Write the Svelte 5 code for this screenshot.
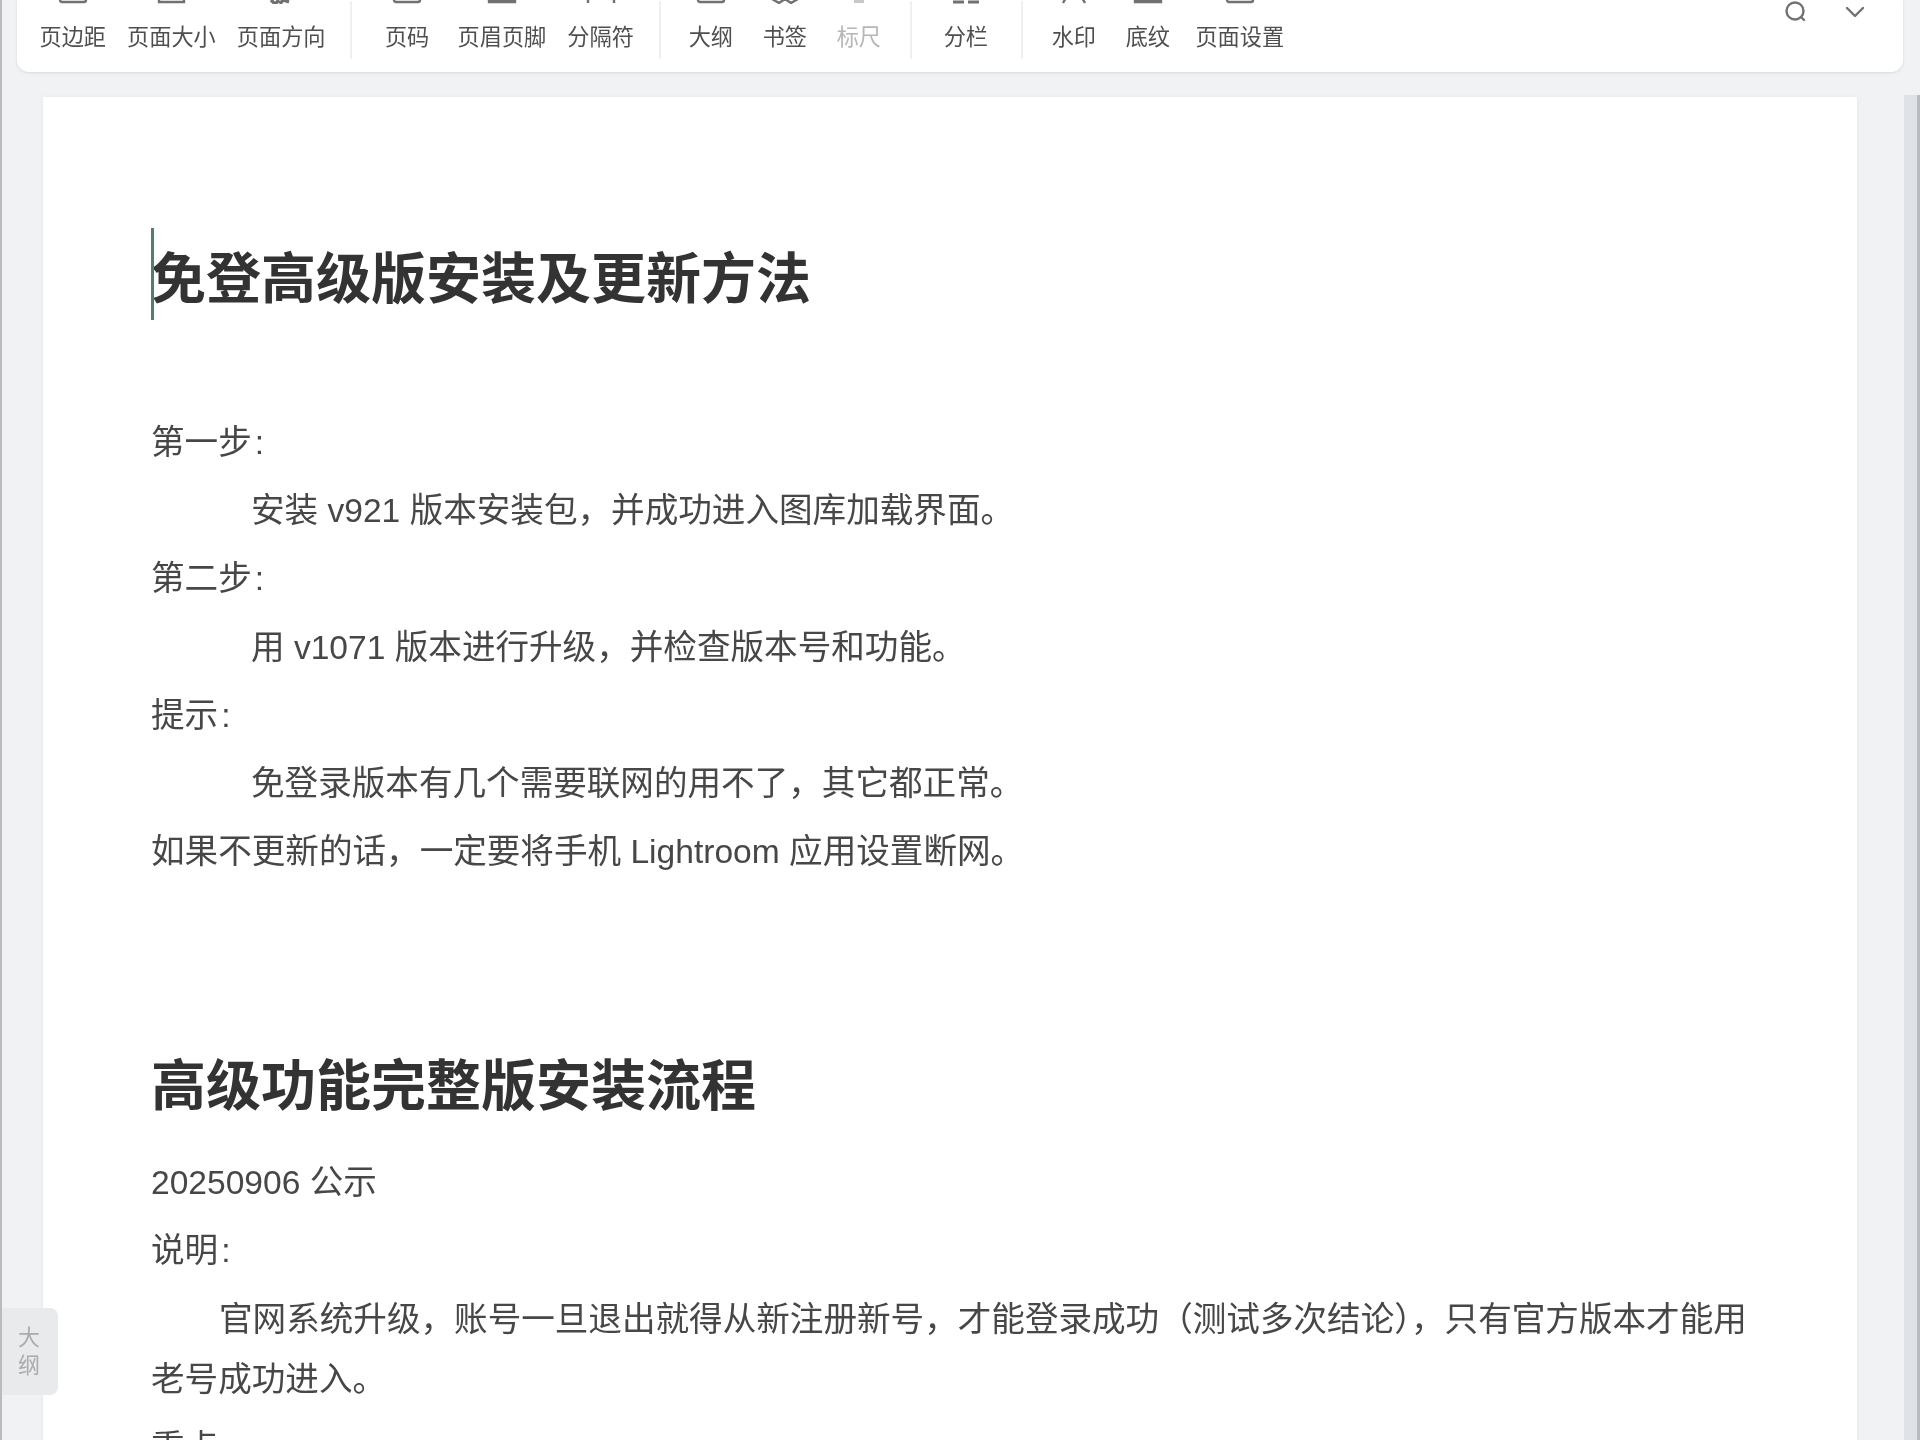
<script>
  const groups = [
    [{ t: '页边距', i: 'box' }, { t: '页面大小', i: 'size' }, { t: '页面方向', i: 'dir' }],
    [{ t: '页码', i: 'box', wide: true }, { t: '页眉页脚', i: 'fill' }, { t: '分隔符', i: 'legs' }],
    [{ t: '大纲', i: 'box' }, { t: '书签', i: 'book' }, { t: '标尺', i: 'dot', off: true }],
    [{ t: '分栏', i: 'cols' }],
    [{ t: '水印', i: 'legs2' }, { t: '底纹', i: 'fill' }, { t: '页面设置', i: 'box' }]
  ];
</script>

<div class="app">
  <header class="toolbar">
    {#each groups as g, n}
      {#if n > 0}<span class="sep s{n}"></span>{/if}
      {#each g as item}
        <div class="tool" class:off={item.off} class:wide={item.wide}>
          <svg class="ic" width="36" height="36" viewBox="0 0 36 36" fill="none" stroke="currentColor" stroke-width="2.4">
            {#if item.i === 'box'}
              <rect x="5" y="8" width="26" height="26" rx="2" />
            {:else if item.i === 'size'}
              <path d="M6 28v6h6M12 34h19V8" />
            {:else if item.i === 'dir'}
              <path d="M8 32l4 4 4-4M17 36l3-4 6 2" stroke-width="3.4" />
            {:else if item.i === 'fill'}
              <path d="M5 31h26v3H5z" fill="currentColor" />
            {:else if item.i === 'legs'}
              <path d="M5 32v3M31 32v3" />
            {:else if item.i === 'book'}
              <path d="M5 31l7 4 6-4 6 4 7-4" />
            {:else if item.i === 'dot'}
              <path d="M13 30h10v5h-10z" fill="currentColor" stroke="none" />
            {:else if item.i === 'cols'}
              <path d="M5 34h11M20 34h11" stroke-width="3" />
            {:else if item.i === 'legs2'}
              <path d="M11 28l-4 7M25 28l4 7" />
            {/if}
          </svg>
          <span class="label">{item.t}</span>
        </div>
      {/each}
    {/each}
    <div class="actions">
      <svg width="24" height="24" viewBox="0 0 24 24" fill="none" stroke="#6f7173" stroke-width="2.4" stroke-linecap="round">
        <circle cx="11" cy="11" r="8.5" /><path d="M17 17l3 3" />
      </svg>
      <svg width="24" height="24" viewBox="0 0 24 24" fill="none" stroke="#6f7173" stroke-width="2.4" stroke-linecap="round" stroke-linejoin="round">
        <path d="M4 8l8 8 8-8" />
      </svg>
    </div>
  </header>

  <main class="page">
    <h1 class="first"><i class="caret"></i>免登高级版安装及更新方法</h1>
    <p>第一步<span class="colon">:</span></p>
    <p class="in3">安装 v921 版本安装包&#xFF0C;并成功进入图库加载界面。</p>
    <p>第二步<span class="colon">:</span></p>
    <p class="in3">用 v1071 版本进行升级&#xFF0C;并检查版本号和功能。</p>
    <p>提示<span class="colon">:</span></p>
    <p class="in3">免登录版本有几个需要联网的用不了&#xFF0C;其它都正常。</p>
    <p>如果不更新的话&#xFF0C;一定要将手机 Lightroom 应用设置断网。</p>
    <h1 class="second">高级功能完整版安装流程</h1>
    <p>20250906 公示</p>
    <p>说明<span class="colon">:</span></p>
    <p class="in2">官网系统升级&#xFF0C;账号一旦退出就得从新注册新号&#xFF0C;才能登录成功&#xFF08;测试多次结论&#xFF09;&#xFF0C;只有官方版本才能用老号成功进入。</p>
    <p>重点<span class="colon">:</span></p>
  </main>

  <aside class="outline"><span>大</span><span>纲</span></aside>
  <div class="edge"></div>
  <div class="thumb"></div>
</div>

<style>
  :global(body) { margin: 0; background: #f1f2f4; }
  .app {
    position: relative;
    height: 1440px;
    overflow: hidden;
    background: #f1f2f4;
    font-family: "Liberation Sans", "Noto Sans CJK SC", sans-serif;
    filter: blur(0.7px);
  }
  .toolbar {
    box-sizing: border-box;
    display: flex;
    align-items: flex-end;
    height: 72px;
    margin: 0 17px;
    width: 1886px;
    padding: 0 12px 21px;
    background: #fff;
    border-radius: 0 0 12px 12px;
    box-shadow: 0 1px 3px rgba(0, 0, 0, 0.1);
  }
  .tool {
    box-sizing: border-box;
    display: flex;
    flex-direction: column;
    align-items: center;
    min-width: 74px;
    padding: 0 10.5px;
    color: #6f7173;
  }
  .tool.wide { min-width: 80px; }
  .tool.off { color: #c6c8ca; }
  .ic { display: block; margin-bottom: 21px; flex: none; }
  .label {
    font-size: 22.2px;
    line-height: 26px;
    color: #4e4f50;
    white-space: nowrap;
  }
  .off .label { color: #b5b6b7; }
  .sep {
    flex: none;
    width: 2px;
    height: 58px;
    margin-bottom: -8px;
    background: #f0f0f1;
  }
  .s1 { margin-left: 14px; margin-right: 15px; }
  .s2 { margin-left: 14.5px; margin-right: 13px; }
  .s3 { margin-left: 14px; margin-right: 17px; }
  .s4 { margin-left: 18px; margin-right: 14px; }
  .actions {
    margin-left: auto;
    display: flex;
    gap: 35px;
    align-self: flex-start;
    margin-right: 24px;
    margin-top: 0;
  }
  .page {
    box-sizing: border-box;
    margin: 25px 0 0 43px;
    width: 1814px;
    padding: 136px 108px 0;
    background: #fff;
    color: #474747;
    box-shadow: 0 0 4px rgba(0, 0, 0, 0.06);
  }
  h1 {
    position: relative;
    margin: 0;
    font-size: 55px;
    line-height: 92px;
    font-weight: 700;
    color: #333;
  }
  .first { margin-bottom: 88px; }
  .second { margin: 158px 0 21px; }
  .caret {
    position: absolute;
    left: 0;
    top: -5px;
    width: 3px;
    height: 92px;
    background: #4f7f70;
  }
  p {
    margin: 0 0 8.2px;
    font-size: 33.6px;
    line-height: 60px;
  }
  .colon { margin-left: 3px; }
  .in3 { text-indent: 100px; }
  .in2 { text-indent: 68px; }
  .outline {
    position: absolute;
    left: 0;
    top: 1308px;
    width: 58px;
    height: 87px;
    box-sizing: border-box;
    padding-top: 16px;
    display: flex;
    flex-direction: column;
    align-items: center;
    font-size: 22px;
    line-height: 28px;
    color: #a9abad;
    background: #e8eaec;
    border-radius: 0 8px 8px 0;
  }
  .edge {
    position: absolute;
    left: 0;
    top: 0;
    bottom: 0;
    width: 2px;
    background: #b9bbbe;
  }
  .thumb {
    position: absolute;
    right: 0;
    top: 95px;
    bottom: 0;
    width: 13px;
    border-right: 3px solid #b9bbbe;
    background: #dfe2e6;
  }
</style>
